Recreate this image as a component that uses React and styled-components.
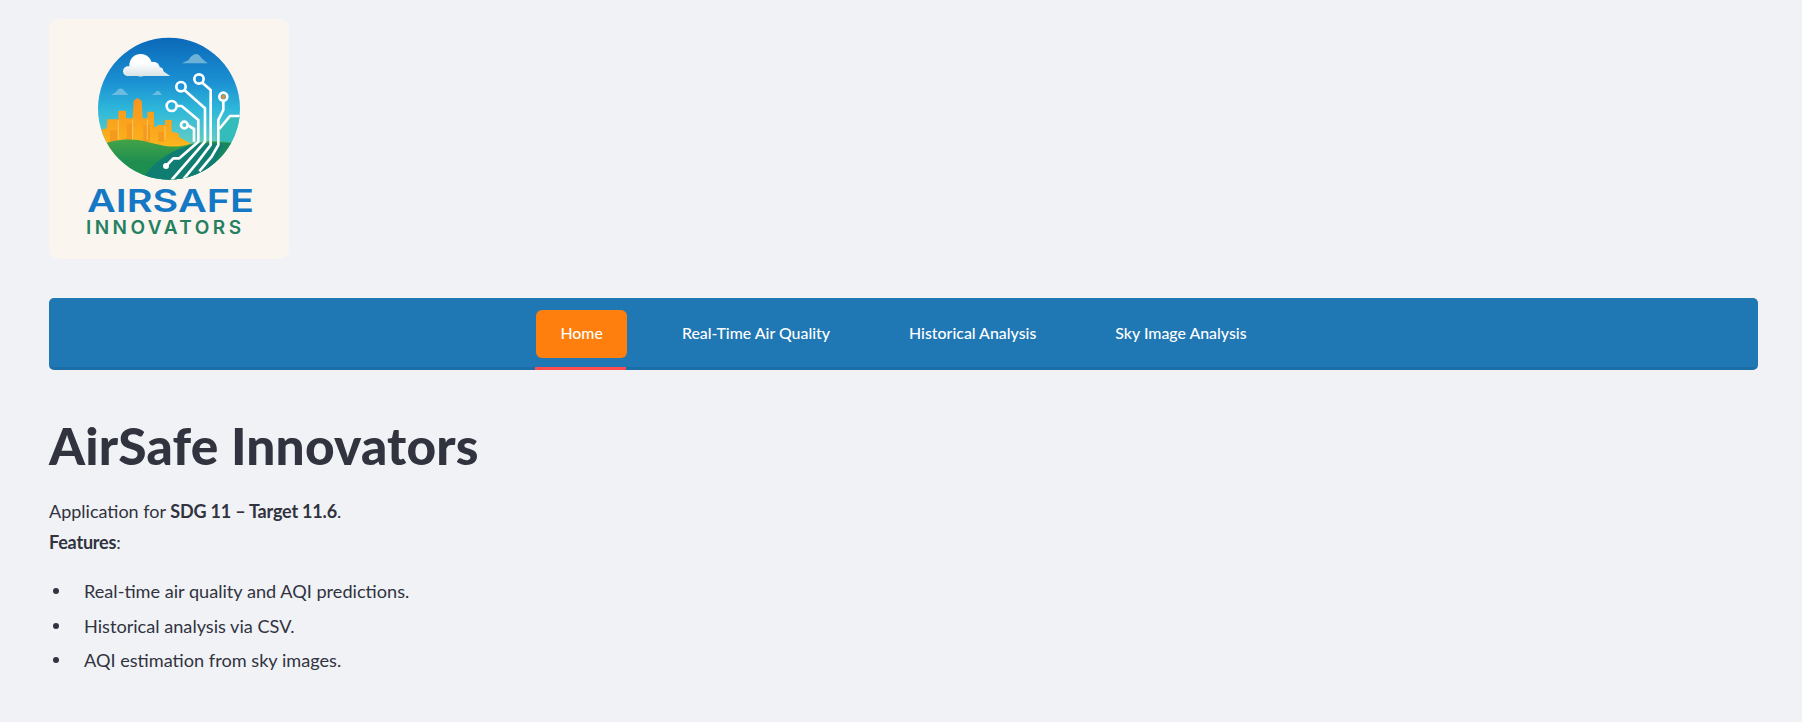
import React from 'react';
import styled, { createGlobalStyle } from 'styled-components';

const GlobalStyle = createGlobalStyle`
  html, body {
    margin: 0;
    background: #f0f2f6;
  }
  body {
    font-family: "Lato", "Noto Sans", sans-serif;
    color: #31333f;
  }
`;

const Page = styled.main`
  padding: 19px 44px 0 49px;
`;

const LogoCard = styled.div`
  width: 240px;
  height: 240px;
  border-radius: 9px;
  overflow: hidden;
  background: #faf5ef;
`;

const Nav = styled.nav`
  margin-top: 39px;
  height: 72px;
  box-sizing: border-box;
  padding-top: 12px;
  display: flex;
  justify-content: center;
  gap: 31px;
  background: #1f77b4;
  border-radius: 5px;
  border-bottom: 3px solid #1c6ea8;
`;

const Tab = styled.div`
  position: relative;
  height: 48px;
  padding: 0 24px 3px;
  box-sizing: border-box;
  display: flex;
  align-items: center;
  border-radius: 6px;
  font-size: 15.9px;
  font-weight: 500;
  color: #fff;
  background: ${props => props.active ? '#ff7f0e' : 'transparent'};
  &::after {
    content: '';
    display: ${props => props.active ? 'block' : 'none'};
    position: absolute;
    left: -1px;
    right: 1px;
    bottom: -12px;
    height: 3px;
    background: #ff4b4b;
  }
`;

const Title = styled.h1`
  margin: 40px 0 0;
  font-size: 51.4px;
  line-height: 70px;
  font-weight: 900;
  letter-spacing: 0.2px;
`;

const Paragraph = styled.p`
  margin: 16px 0 0;
  font-size: 18px;
  line-height: 31px;
`;

const Strong = styled.strong`
  font-weight: 700;
  letter-spacing: -0.2px;
`;

const Features = styled.ul`
  margin: 16px 0 0;
  padding: 0;
  list-style: none;
  font-size: 18.15px;
  line-height: 34.5px;
`;

const Feature = styled.li`
  display: flex;
  align-items: center;
  &::before {
    content: '';
    width: 6px;
    height: 6px;
    margin: 0 25px 0 4px;
    border-radius: 50%;
    background: #31333f;
  }
`;

const Logo = () => (
  <svg width="240" height="240" viewBox="0 0 240 240">
    <defs>
      <clipPath id="disc"><circle cx="237" cy="236" r="213" /></clipPath>
      <linearGradient id="sky" x1="0" y1="0" x2="0" y2="1">
        <stop offset="0" stopColor="#0b68b8" />
        <stop offset="0.3" stopColor="#1a8fd2" />
        <stop offset="0.5" stopColor="#2fb8da" />
        <stop offset="0.72" stopColor="#5fcdc4" />
      </linearGradient>
      <linearGradient id="cloud" gradientUnits="userSpaceOnUse" x1="0" y1="72" x2="0" y2="140">
        <stop offset="0.4" stopColor="#ffffff" />
        <stop offset="1" stopColor="#d5e2e4" />
      </linearGradient>
      <linearGradient id="town" x1="0" y1="0" x2="0" y2="1">
        <stop offset="0" stopColor="#f9941e" />
        <stop offset="0.7" stopColor="#fbae1c" />
        <stop offset="1" stopColor="#fdc61c" />
      </linearGradient>
      <linearGradient id="lawn" x1="0" y1="0" x2="0" y2="1">
        <stop offset="0" stopColor="#43a347" />
        <stop offset="0.5" stopColor="#1f8f50" />
      </linearGradient>
    </defs>
    <g transform="translate(41 11) scale(0.3333)">
      <g clipPath="url(#disc)">
        <rect x="20" y="20" width="440" height="440" fill="url(#sky)" />
        <path d="M388 300L420 258H455V345H385Z" fill="#33bcba" />
        <g fill="url(#cloud)">
          <circle cx="152" cy="106" r="34" />
          <circle cx="114" cy="124" r="15" />
          <circle cx="190" cy="114" r="19" />
          <circle cx="208" cy="124" r="12" />
          <path d="M114 110H200L241 138H114Z" />
        </g>
        <path d="M275 100L296 90C305 72 324 64 334 84L353 100Z" fill="#6cb2d6" />
        <path d="M63 195L78 186C85 172 98 172 104 184L116 195Z" fill="#6dbbe0" />
        <path d="M185 195L196 188C200 180 208 182 212 190L216 195Z" fill="#67bde0" />
        <path d="M30 300L50 295L52 268H85V242H108V265H128L131 212L142 204L155 212L158 265H172V245H192V290H202V285H225V270H245V305L265 310L268 322L310 345V380H30Z" fill="url(#town)" />
        <path d="M60 300H82V335H60ZM110 280H126V335H110ZM160 285H180V335H160ZM205 305H222V335H205Z" fill="#f59a1c" />
        <path d="M128 268V330M172 268V330M85 270V330M225 288V330" stroke="#fccb6a" strokeWidth="2.5" fill="none" />
        <path d="M20 350C60 330 120 322 170 335C215 346 250 358 300 342L340 335C380 332 420 336 455 345V460H20Z" fill="url(#lawn)" />
        <path d="M300 345C360 332 420 336 455 345V460H250Z" fill="#1a8660" />
        <path d="M150 460C180 400 240 360 320 340L400 345L350 460Z" fill="#0f7d72" />
        <g fill="none" stroke="#fff" strokeWidth="8" strokeLinejoin="round">
          <path d="M337 158L362 180V345L320 400L270 460" />
          <path d="M284 181L345 235V335L245 450" />
          <path d="M260 228H275L325 270V335L268 385H250L228 408" />
          <path d="M292 285L312 297V335" />
          <path d="M400 213V240L385 270V345L365 380L328 424" />
          <path d="M388 297L420 258H452" />
          <circle cx="327" cy="147" r="14" />
          <circle cx="273" cy="170" r="14" />
          <circle cx="245" cy="228" r="15" />
          <circle cx="283" cy="285" r="10" />
          <circle cx="400" cy="200" r="12" />
        </g>
        <circle cx="400" cy="200" r="6" fill="#f08a2c" />
        <circle cx="228" cy="408" r="9" fill="#fff" />
      </g>
    </g>
    <text x="38" y="193" textLength="167" lengthAdjust="spacingAndGlyphs" fontFamily="Inter, sans-serif" fontWeight="600" fontSize="31.5" fill="#1478c4">AIRSAFE</text>
    <text x="37" y="215" textLength="155" lengthAdjust="spacing" fontFamily="Inter, sans-serif" fontWeight="600" fontSize="19" fill="#24805f">INNOVATORS</text>
  </svg>
);

const tabs = ['Home', 'Real-Time Air Quality', 'Historical Analysis', 'Sky Image Analysis'];

const features = [
  'Real-time air quality and AQI predictions.',
  'Historical analysis via CSV.',
  'AQI estimation from sky images.',
];

const App = () => (
  <Page>
    <GlobalStyle />
    <LogoCard>
      <Logo />
    </LogoCard>
    <Nav>
      {tabs.map((tab, i) => <Tab key={tab} active={i === 0}>{tab}</Tab>)}
    </Nav>
    <Title>AirSafe Innovators</Title>
    <Paragraph>
      Application for <Strong>SDG 11 – Target 11.6</Strong>.<br />
      <Strong>Features</Strong>:
    </Paragraph>
    <Features>
      {features.map(item => <Feature key={item}>{item}</Feature>)}
    </Features>
  </Page>
);

export default App;
